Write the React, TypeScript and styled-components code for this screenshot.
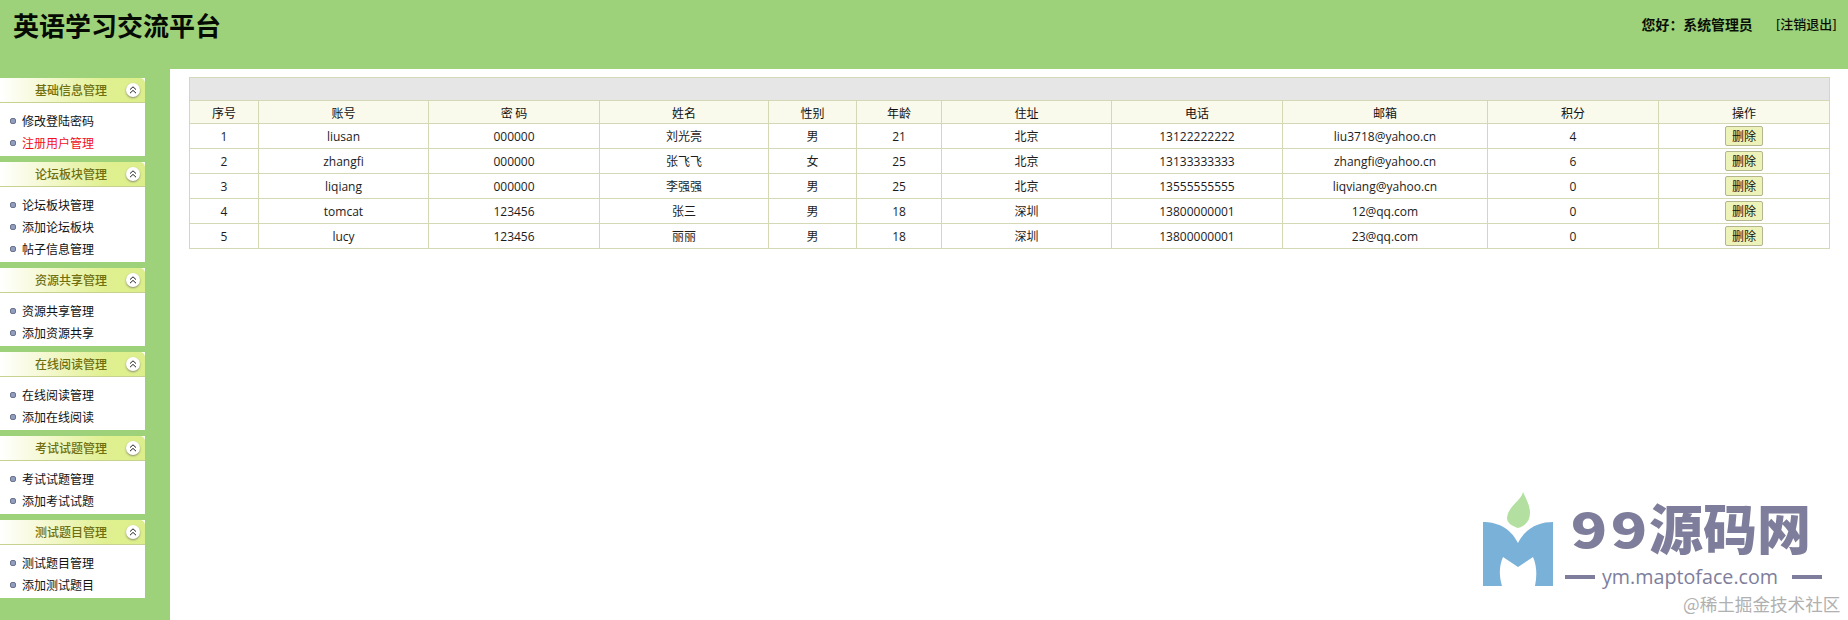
import React from "react";
import styled, { createGlobalStyle } from "styled-components";

const Global = createGlobalStyle`
  html, body { margin: 0; padding: 0; height: 620px; overflow: hidden; background: #9dd17a; }
  body { font-family: "Open Sans", "Noto Sans CJK SC", sans-serif; font-size: 12px; color: #222; }
  * { box-sizing: border-box; }
`;

const Page = styled.div`
  position: relative;
  width: 1848px;
  height: 620px;
  display: flex;
  flex-direction: column;
  overflow: hidden;
`;

const TopBar = styled.header`
  height: 69px;
  flex: none;
  display: flex;
  justify-content: space-between;
  padding: 8px 11px 0 13px;
  background: #9dd17a;
`;

const Brand = styled.h1`
  margin: 0;
  font: 700 26px/34px "Noto Sans CJK SC", sans-serif;
  color: #050a02;
`;

const UserBox = styled.div`
  display: flex;
  align-items: center;
  height: 32px;
  gap: 23px;
  color: #0a0f06;
`;

const Greeting = styled.strong`
  font: 700 13.9px/20px "Noto Sans CJK SC", sans-serif;
`;

const Logout = styled.a`
  font: 500 13px/20px "Noto Sans CJK SC", sans-serif;
`;

const Main = styled.div`
  flex: 1;
  display: flex;
  min-height: 0;
`;

const Sidebar = styled.nav`
  width: 170px;
  flex: none;
  padding: 9px 25px 0 0;
  display: flex;
  flex-direction: column;
  gap: 6px;
`;

const Panel = styled.section`
  background: #fff;
`;

const PanelHead = styled.div`
  position: relative;
  height: 25px;
  display: flex;
  align-items: center;
  padding-left: 35px;
  border-bottom: 1px solid #c6d28e;
  border-top-right-radius: 5px;
  background: linear-gradient(90deg, #ffffff 0%, #f6f9d6 28%, #e0f090 72%, #dcee8c 100%);
  font: 500 12px/24px "Noto Sans CJK SC", sans-serif;
  color: #6f6f10;
`;

const Toggle = styled.span`
  position: absolute;
  right: 5px;
  top: 5px;
  width: 14px;
  height: 14px;
  border-radius: 50%;
  background: #fff;
  box-shadow: 0 1px 2px #8b8b70;
  display: flex;
  align-items: center;
  justify-content: center;
`;

const PanelBody = styled.ul`
  margin: 0;
  padding: 7px 0 2px;
  list-style: none;
`;

const Item = styled.li<{ $active?: boolean }>`
  height: 22px;
  display: flex;
  align-items: center;
  padding-left: 10px;
  gap: 6px;
  font: 400 12px/22px "Noto Sans CJK SC", sans-serif;
  color: ${(p) => (p.$active ? "#f0101c" : "#111")};
`;

const Bullet = styled.i`
  width: 6px;
  height: 6px;
  border-radius: 2px;
  background: #8f9dc0;
  border: 1px solid #6b7488;
`;

const Content = styled.main`
  flex: 1;
  background: #fff;
  padding: 8px 19px 0;
`;

const Table = styled.table`
  width: 1640px;
  table-layout: fixed;
  border-collapse: collapse;
  text-align: center;
`;

const TitleCell = styled.td`
  height: 23px;
  padding: 0;
  background: #e6e6e6;
  border: 1px solid #d5d8b4;
`;

const Th = styled.th`
  height: 23px;
  padding: 1px 0 0;
  font: 400 12px/20px "Noto Sans CJK SC", sans-serif;
  color: #111;
  background: #f9f9ec;
  border: 1px solid #d5d8b4;
`;

const Td = styled.td`
  height: 25px;
  padding: 1px 0 0;
  font: 400 12px/20px "Open Sans", "Noto Sans CJK SC", sans-serif;
  color: #1c1c1c;
  border: 1px solid #d5d8b4;
`;

const ActionCell = styled(Td)`
  padding: 0;
`;

const DeleteButton = styled.button`
  display: block;
  margin: 0 auto;
  width: 38px;
  height: 20px;
  padding: 0;
  border: 1px solid #b4b68e;
  border-radius: 2px;
  background: #edf2b8;
  font: 400 12px/18px "Noto Sans CJK SC", sans-serif;
  color: #111;
`;

const Watermark = styled.div`
  position: absolute;
  left: 1483px;
  top: 490px;
  width: 365px;
  height: 130px;
  color: #7e7e9c;
`;

const LogoMark = styled.svg`
  position: absolute;
  left: 0;
  top: 0;
`;

const MarkName = styled.div`
  position: absolute;
  left: 87px;
  top: 10px;
  display: flex;
  align-items: center;
  height: 54px;
  font: 900 54px/54px "Noto Sans CJK SC", sans-serif;
  white-space: nowrap;
`;

const Nine = styled.span`
  display: inline-block;
  width: 38px;
  text-align: center;
  font-size: 48px;
  transform: scaleX(1.25);
  &:nth-child(2) {
    margin-left: 2px;
    margin-right: 1px;
  }
`;

const MarkUrl = styled.div`
  position: absolute;
  left: 82px;
  top: 75px;
  display: flex;
  align-items: center;
  gap: 7px;
  height: 24px;
  font: 500 19.7px/24px "Open Sans", sans-serif;
  white-space: nowrap;
`;

const Dash = styled.i`
  width: 30px;
  height: 4px;
  background: #7e7e9c;
`;

const TrailingDash = styled(Dash)`
  margin-left: 7px;
`;

const Credit = styled.div`
  position: absolute;
  left: 200px;
  top: 102px;
  font: 400 17.6px/24px "Noto Sans CJK SC", sans-serif;
  color: #b0b0b0;
  white-space: nowrap;
`;

const menus = [
  { title: "基础信息管理", items: ["修改登陆密码", "注册用户管理"], active: 1 },
  { title: "论坛板块管理", items: ["论坛板块管理", "添加论坛板块", "帖子信息管理"] },
  { title: "资源共享管理", items: ["资源共享管理", "添加资源共享"] },
  { title: "在线阅读管理", items: ["在线阅读管理", "添加在线阅读"] },
  { title: "考试试题管理", items: ["考试试题管理", "添加考试试题"] },
  { title: "测试题目管理", items: ["测试题目管理", "添加测试题目"] },
];

const widths = [69, 170, 171, 169, 88, 85, 170, 171, 205, 171, 171];
const heads = ["序号", "账号", "密 码", "姓名", "性别", "年龄", "住址", "电话", "邮箱", "积分", "操作"];
const rows = [
  ["1", "liusan", "000000", "刘光亮", "男", "21", "北京", "13122222222", "liu3718@yahoo.cn", "4"],
  ["2", "zhangfi", "000000", "张飞飞", "女", "25", "北京", "13133333333", "zhangfi@yahoo.cn", "6"],
  ["3", "liqiang", "000000", "李强强", "男", "25", "北京", "13555555555", "liqviang@yahoo.cn", "0"],
  ["4", "tomcat", "123456", "张三", "男", "18", "深圳", "13800000001", "12@qq.com", "0"],
  ["5", "lucy", "123456", "丽丽", "男", "18", "深圳", "13800000001", "23@qq.com", "0"],
];

const Chevrons = () => (
  <svg width="8" height="8" viewBox="0 0 8 8" fill="none" stroke="#222" strokeWidth="1">
    <path d="M1 3.6 4 .8l3 2.8M1 7.2l3-2.8 3 2.8" />
  </svg>
);

export default function App() {
  return (
    <Page>
      <Global />
      <TopBar>
        <Brand>英语学习交流平台</Brand>
        <UserBox>
          <Greeting>您好：系统管理员</Greeting>
          <Logout>[注销退出]</Logout>
        </UserBox>
      </TopBar>
      <Main>
        <Sidebar>
          {menus.map((m) => (
            <Panel key={m.title}>
              <PanelHead>
                {m.title}
                <Toggle>
                  <Chevrons />
                </Toggle>
              </PanelHead>
              <PanelBody>
                {m.items.map((it, i) => (
                  <Item key={it} $active={m.active === i}>
                    <Bullet />
                    {it}
                  </Item>
                ))}
              </PanelBody>
            </Panel>
          ))}
        </Sidebar>
        <Content>
          <Table>
            <colgroup>
              {widths.map((w, i) => (
                <col key={i} style={{ width: w }} />
              ))}
            </colgroup>
            <tbody>
              <tr>
                <TitleCell colSpan={11} />
              </tr>
              <tr>
                {heads.map((h) => (
                  <Th key={h}>{h}</Th>
                ))}
              </tr>
              {rows.map((r) => (
                <tr key={r[0]}>
                  {r.map((c, i) => (
                    <Td key={i}>{c}</Td>
                  ))}
                  <ActionCell>
                    <DeleteButton>删除</DeleteButton>
                  </ActionCell>
                </tr>
              ))}
            </tbody>
          </Table>
        </Content>
      </Main>
      <Watermark>
        <LogoMark width="72" height="98" viewBox="0 0 72 98">
          <path d="M0 32c13 0 27 5 35 21C43 37 57 32 70 32v64H52c2-10 2-20-2-29L35 77 20 67c-4 9-4 19-1 29H0z" fill="#7ab1d8" />
          <path d="M40 2c-2 9-15 14-16 26 0 5 5 8 11 10 8-2 12-8 12-15 0-8-4-14-7-21z" fill="#b3e0a0" />
        </LogoMark>
        <MarkName>
          <Nine>9</Nine>
          <Nine>9</Nine>
          <span>源码网</span>
        </MarkName>
        <MarkUrl>
          <Dash />
          ym.maptoface.com
          <TrailingDash />
        </MarkUrl>
        <Credit>@稀土掘金技术社区</Credit>
      </Watermark>
    </Page>
  );
}
